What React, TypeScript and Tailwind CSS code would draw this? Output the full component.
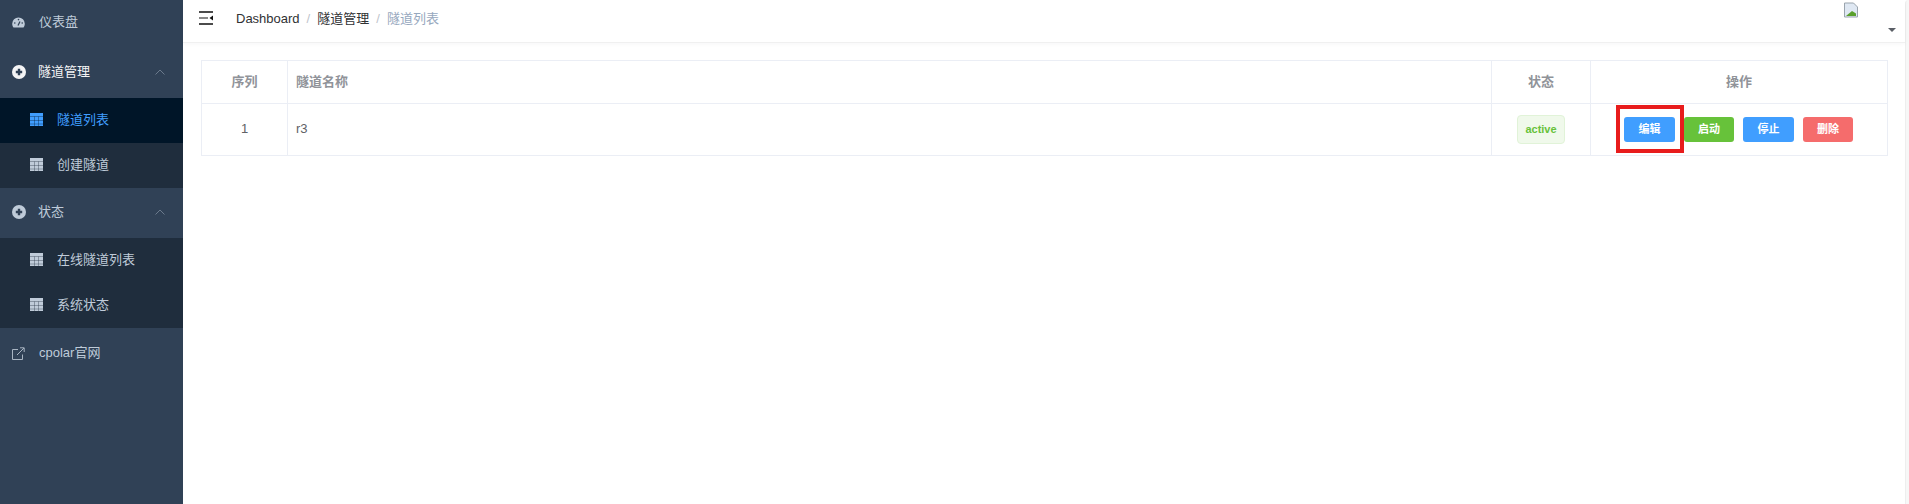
const font = "font-['Helvetica_Neue',Helvetica,'Liberation_Sans','Noto_Sans_CJK_SC',sans-serif]";

function GridIcon({ active }: { active?: boolean }) {
  const color = active ? "#409eff" : "#bfcbd9";
  return (
    <svg width="13" height="13" viewBox="0 0 13 13" className="shrink-0">
      <rect width="13" height="13" fill={color} />
      <path d="M0 3.5h13M0 7.5h13M0 11h13M4.5 3.5v9.5M8.5 3.5v9.5" stroke={active ? "#001528" : "#1f2d3d"} strokeOpacity="0.45" strokeWidth="0.8" />
    </svg>
  );
}

function GaugeIcon() {
  return (
    <svg width="13" height="11" viewBox="0 0 13 11" className="shrink-0">
      <path d="M6.5 0.5a6.3 6.3 0 0 0-6.3 6.3c0 1.5.5 2.8 1.3 3.7h10c.8-.9 1.3-2.2 1.3-3.7A6.3 6.3 0 0 0 6.5.5z" fill="#bfcbd9" />
      <circle cx="6.5" cy="2.6" r="0.8" fill="#304156" />
      <circle cx="2.8" cy="6" r="0.8" fill="#304156" />
      <circle cx="10.2" cy="6" r="0.8" fill="#304156" />
      <path d="M6 8.5l2-4" stroke="#304156" strokeWidth="1.2" />
    </svg>
  );
}

function PlusCircleIcon({ color }: { color: string }) {
  return (
    <svg width="14" height="14" viewBox="0 0 14 14" className="shrink-0">
      <circle cx="7" cy="7" r="7" fill={color} />
      <path d="M7 3.8v6.4M3.8 7h6.4" stroke="#304156" strokeWidth="2.4" />
    </svg>
  );
}

function LinkIcon() {
  return (
    <svg width="13" height="13" viewBox="0 0 13 13" className="shrink-0" fill="none" stroke="#a8b4c2" strokeWidth="1">
      <path d="M6 2.5H0.5v10h10V7.5" />
      <path d="M5 8l7-7M8 0.8h4.2V5" />
    </svg>
  );
}

function MenuChevron() {
  return (
    <svg width="10" height="6" viewBox="0 0 10 6" fill="none" stroke="#6b7a8c" strokeWidth="1" className="shrink-0">
      <path d="M0.5 5.5L5 1l4.5 4.5" />
    </svg>
  );
}

function SubItem({ label, active }: { label: string; active?: boolean }) {
  return (
    <div className={`h-[45px] pb-[2px] flex items-center pl-[30px] text-[13px] ${active ? "bg-[#001528] text-[#409eff]" : "bg-[#1f2d3d] text-[#bfcbd9]"}`}>
      <GridIcon active={active} />
      <span className="ml-[14px]">{label}</span>
    </div>
  );
}

function GroupTitle({ label, color }: { label: string; color: string }) {
  return (
    <div className="h-[50px] pb-[2px] flex items-center pl-[12px] pr-[18px] text-[13px]" style={{ color }}>
      <PlusCircleIcon color={color} />
      <span className="ml-[12px] flex-1">{label}</span>
      <MenuChevron />
    </div>
  );
}

function ActionButton({ label, color }: { label: string; color: string }) {
  return (
    <button className={`h-[25px] rounded-[3px] text-white text-[11px] font-bold ${color}`}>{label}</button>
  );
}

export default function App() {
  return (
    <div className={`${font} h-[504px] flex overflow-hidden bg-white`}>
      <aside className="w-[183px] shrink-0 bg-[#304156] overflow-hidden text-[#bfcbd9]">
        <div className="h-[48px] pb-[4px] flex items-center pl-[12px] text-[13px]">
          <GaugeIcon />
          <span className="ml-[14px]">仪表盘</span>
        </div>
        <GroupTitle label="隧道管理" color="#f4f4f5" />
        <SubItem label="隧道列表" active />
        <SubItem label="创建隧道" />
        <GroupTitle label="状态" color="#bfcbd9" />
        <SubItem label="在线隧道列表" />
        <SubItem label="系统状态" />
        <div className="h-[50px] flex items-center pl-[12px] text-[13px]">
          <LinkIcon />
          <span className="ml-[14px]">cpolar官网</span>
        </div>
      </aside>
      <main className="flex-1 min-w-0">
        <header className="h-[43px] flex items-start border-b border-[#f0f0f0] shadow-[0_1px_4px_rgba(0,21,41,0.04)] relative">
          <svg width="14" height="14" viewBox="0 0 14 14" className="ml-[16px] mt-[11px] shrink-0">
            <path d="M0 1h14M0 13h14" stroke="#111" strokeWidth="1.4" />
            <path d="M0 7h9" stroke="#555" strokeWidth="1.4" />
            <path d="M14 4.6v4.8L10.5 7z" fill="#111" />
          </svg>
          <nav className="ml-[23px] mt-[9px] text-[13px] flex items-center">
            <span className="text-[#303133]">Dashboard</span>
            <span className="mx-[7px] text-[#c0c4cc]">/</span>
            <span className="text-[#303133]">隧道管理</span>
            <span className="mx-[7px] text-[#c0c4cc]">/</span>
            <span className="text-[#97a8be]">隧道列表</span>
          </nav>
          <div className="absolute left-[1660px] top-[2px] w-[16px] h-[16px]">
            <svg width="16" height="16" viewBox="0 0 16 16">
              <path d="M1.5 1h9l4 4v10h-13z" fill="#dfe8f3" stroke="#9aa4ad" />
              <path d="M3 14l6-5 4 2.5V14z" fill="#5aa02c" />
            </svg>
          </div>
          <span className="absolute left-[1705px] top-[28px] w-0 h-0 border-x-[4.5px] border-x-transparent border-t-[4px] border-t-[#5a5e66]" />
        </header>
        <div className="pt-[17px] pl-[18px] pr-[17px]">
          <table className="w-full table-fixed border-collapse text-[13px] text-[#606266]">
            <colgroup>
              <col className="w-[86px]" />
              <col />
              <col className="w-[99px]" />
              <col className="w-[297px]" />
            </colgroup>
            <thead>
              <tr className="h-[43px] text-[#909399]">
                <th className="border border-[#ebeef5] text-center font-bold">序列</th>
                <th className="border border-[#ebeef5] text-left pl-[8px] font-bold">隧道名称</th>
                <th className="border border-[#ebeef5] text-center font-bold">状态</th>
                <th className="border border-[#ebeef5] text-center font-bold">操作</th>
              </tr>
            </thead>
            <tbody>
              <tr className="h-[52px]">
                <td className="border border-[#ebeef5] text-center pb-[2px]">1</td>
                <td className="border border-[#ebeef5] pl-[8px] pb-[2px]">r3</td>
                <td className="border border-[#ebeef5] text-center">
                  <span className="inline-flex items-center justify-center h-[29px] w-[48px] rounded border border-[#e1f3d8] bg-[#f0f9eb] text-[#67c23a] text-[11px] font-bold">active</span>
                </td>
                <td className="border border-[#ebeef5]">
                  <div className="grid grid-cols-[51px_50px_51px_50px] gap-x-[9px] pl-[33px] relative items-center">
                    <ActionButton label="编辑" color="bg-[#409eff]" />
                    <ActionButton label="启动" color="bg-[#67c23a]" />
                    <ActionButton label="停止" color="bg-[#409eff]" />
                    <ActionButton label="删除" color="bg-[#f56c6c]" />
                    <span className="absolute left-[25px] -top-[12px] w-[68px] h-[48px] border-[4px] border-[#e81c1c]" />
                  </div>
                </td>
              </tr>
            </tbody>
          </table>
        </div>
      </main>
      <div className="w-[4px] shrink-0 bg-[#f7f7f7] border-l border-[#eeeeee] rounded-tl-[4px]" />
    </div>
  );
}
